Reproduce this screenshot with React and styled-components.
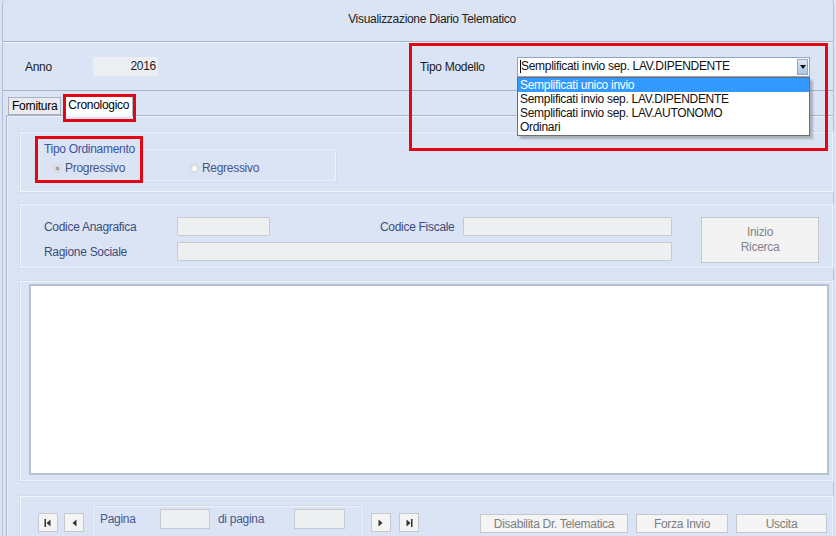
import React from "react";
import styled, { createGlobalStyle } from "styled-components";

const GlobalStyle = createGlobalStyle`
  html, body {
    margin: 0;
    padding: 0;
    background: #dae4f4;
  }
  body {
    font-family: "Liberation Sans", Arial, sans-serif;
    font-size: 12px;
    letter-spacing: -0.3px;
  }
`;

const Window = styled.div`
  position: relative;
  width: 836px;
  height: 536px;
  overflow: hidden;
  background: #dae4f4;
  display: flex;
  flex-direction: column;
`;

const Frame = styled.div`
  flex: 1;
  margin: 0 2px;
  border-left: 1px solid #b3c0d3;
  border-right: 1px solid #b3c0d3;
  border-top-left-radius: 4px;
  border-top-right-radius: 4px;
  display: flex;
  flex-direction: column;
`;

const TitleBar = styled.div`
  height: 38px;
  padding: 0 0 3px 28px;
  display: flex;
  align-items: center;
  justify-content: center;
  color: #222;
  border-bottom: 1px solid #a8b5c8;
`;

const HeaderPanel = styled.div`
  position: relative;
  height: 47px;
  border-top: 1px solid #f0f4fb;
  border-bottom: 1px solid #a8b5c8;
  display: flex;
  align-items: center;
  justify-content: space-between;
  padding: 0 23px 0 22px;
`;

const FieldGroup = styled.div`
  position: relative;
  display: flex;
  align-items: center;
`;

const HeaderLabel = styled.span`
  width: ${(p) => p.$w}px;
  color: #1c1c1c;
`;

const YearBox = styled.div`
  width: 63px;
  height: 19px;
  background: #eceef2;
  text-align: right;
  line-height: 19px;
  padding-right: 2px;
  color: #1c1c1c;
`;

const Combo = styled.div`
  position: relative;
  width: 291px;
  height: 18px;
  background: #fff;
  border: 1px solid #8ea4c2;
  display: flex;
  align-items: center;
  color: #111;
`;

const ComboText = styled.span`
  flex: 1;
  border-left: 1px solid #000;
  margin-left: 2px;
  line-height: 13px;
`;

const ComboArrow = styled.div`
  width: 11px;
  height: 16px;
  margin-right: 1px;
  background: linear-gradient(#dfe9f6, #a9c3e2);
  border: 1px solid #90a8c8;
  box-sizing: border-box;
  display: flex;
  align-items: center;
  justify-content: center;
`;

const DropList = styled.div`
  position: absolute;
  top: 19px;
  left: -1px;
  width: 291px;
  background: #fff;
  border: 1px solid #6e6e6e;
  box-shadow: 3px 3px 2px rgba(80, 80, 80, 0.35);
  padding: 0 0 1px 0;
  z-index: 5;
`;

const DropItem = styled.div`
  height: 14px;
  line-height: 14px;
  padding-left: 2px;
  color: ${(p) => (p.$active ? "#fff" : "#111")};
  background: ${(p) => (p.$active ? "#3399ff" : "transparent")};
`;

const Highlight = styled.div`
  position: absolute;
  top: ${(p) => p.$top}px;
  left: ${(p) => p.$left}px;
  width: ${(p) => p.$w}px;
  height: ${(p) => p.$h}px;
  border: 3px solid #e30613;
  box-sizing: border-box;
  pointer-events: none;
  z-index: 10;
`;

const TabArea = styled.div`
  flex: 1;
  display: flex;
  flex-direction: column;
  margin-top: 2px;
`;

const TabStrip = styled.div`
  display: flex;
  align-items: flex-end;
  padding-left: 5px;
  gap: 3px;
  height: 22px;
  position: relative;
  z-index: 2;
`;

const Tab = styled.div`
  position: relative;
  height: ${(p) => (p.$active ? 22 : 18)}px;
  margin-bottom: ${(p) => (p.$active ? -1 : 0)}px;
  padding: 0 3px;
  background: ${(p) => (p.$active ? "#ffffff" : "#e9ebee")};
  border: 1px solid #a9b2be;
  border-bottom: ${(p) => (p.$active ? "none" : "1px solid #a9b2be")};
  box-sizing: border-box;
  display: flex;
  align-items: ${(p) => (p.$active ? "flex-start" : "center")};
  padding-top: ${(p) => (p.$active ? 3 : 0)}px;
  color: #000;
`;

const TabPanel = styled.div`
  position: relative;
  flex: 1;
  margin-left: 3px;
  border-left: 1px solid #a9b5c6;
  border-top: 1px solid #a9b5c6;
  box-shadow: inset 1px 1px 0 #eef3fb;
  padding: 16px 0 0 13px;
  display: flex;
  flex-direction: column;
`;

const Section = styled.div`
  position: relative;
  height: ${(p) => p.$h}px;
  margin-top: ${(p) => p.$mt || 0}px;
  border: 1px solid #eef3fb;
  box-shadow: 0 0 0 1px #d2dcec;
  box-sizing: border-box;
  flex-shrink: 0;
`;

const GroupBox = styled.fieldset`
  width: 301px;
  height: 39px;
  margin: 9px 0 0 14px;
  padding: 0 0 0 17px;
  box-sizing: border-box;
  border: 1px solid #eaf0fa;
  box-shadow: 0 0 0 1px #d3ddec;
`;

const Legend = styled.legend`
  padding: 0 1px;
  margin-left: -10px;
  color: #3a56a4;
  line-height: 14px;
`;

const RadioRow = styled.div`
  display: flex;
  align-items: center;
  height: 20px;
  margin-top: 2px;
`;

const RadioItem = styled.label`
  display: flex;
  align-items: center;
  width: ${(p) => p.$w}px;
  color: #4a5483;
  gap: 3px;
`;

const RadioDot = styled.span`
  width: 9px;
  height: 9px;
  border-radius: 50%;
  border: 1px solid #cdd1d6;
  background: ${(p) =>
    p.$checked
      ? "radial-gradient(circle, #a4a4a4 0 1.8px, #ececec 2.4px)"
      : "radial-gradient(circle, #fbfbfb 0, #e4e4e4 100%)"};
  box-sizing: border-box;
`;

const SearchGrid = styled.div`
  display: grid;
  grid-template-columns: 133px 93px 110px 83px 209px 29px 118px;
  grid-template-rows: 19px 19px;
  row-gap: 6px;
  padding: 12px 0 0 23px;
  align-items: center;
`;

const FormLabel = styled.span`
  color: #3d4c7e;
  white-space: nowrap;
`;

const InputBox = styled.div`
  grid-column: ${(p) => p.$col || "auto"};
  height: 19px;
  background: #eeeff1;
  border: 1px solid #c6cbd3;
  box-sizing: border-box;
  border-radius: 1px;
`;

const SearchButton = styled.div`
  grid-column: 7;
  grid-row: 1 / 3;
  align-self: start;
  height: 46px;
  background: #f3f3f3;
  border: 1px solid #c4c8cf;
  box-sizing: border-box;
  color: #858585;
  display: flex;
  align-items: center;
  justify-content: center;
  text-align: center;
  line-height: 15px;
`;

const ListBox = styled.div`
  position: absolute;
  top: 2px;
  left: 8px;
  right: 3px;
  bottom: 5px;
  background: #fff;
  border: 2px solid #b8c3d2;
`;

const BottomRow = styled.div`
  display: flex;
  align-items: flex-start;
  padding: 9px 0 0 17px;
`;

const NavButton = styled.div`
  width: 20px;
  height: 19px;
  margin-top: 7px;
  margin-right: ${(p) => p.$mr}px;
  background: #f4f4f4;
  border: 1px solid #c4c8cf;
  box-sizing: border-box;
  display: flex;
  align-items: center;
  justify-content: center;
`;

const PageBox = styled.div`
  width: 270px;
  height: 40px;
  margin-right: 8px;
  border: 1px solid #eaf0fa;
  box-shadow: 0 0 0 1px #d3ddec;
  box-sizing: border-box;
  display: flex;
  align-items: flex-start;
  padding: 2px 0 0 6px;
`;

const PageLabel = styled.span`
  width: ${(p) => p.$w}px;
  color: #4b5a8b;
  line-height: 20px;
`;

const PageInput = styled.div`
  width: ${(p) => p.$w}px;
  height: 20px;
  margin-right: 8px;
  background: #eeeff1;
  border: 1px solid #c6cbd3;
  box-sizing: border-box;
`;

const ActionButton = styled.div`
  width: ${(p) => p.$w}px;
  height: 19px;
  margin-top: 8px;
  margin-left: ${(p) => p.$ml}px;
  background: #f4f4f4;
  border: 1px solid #c4c8cf;
  box-sizing: border-box;
  color: #7f7f7f;
  display: flex;
  align-items: center;
  justify-content: center;
`;

const NavIcon = ({ dir, bar }) => (
  <svg width="10" height="10" viewBox="0 0 10 10">
    {dir === "left" ? (
      <>
        {bar && <rect x="1.5" y="1" width="1.5" height="8" fill="#333" />}
        <polygon points="7.5,1.5 3.5,5 7.5,8.5" fill="#333" />
      </>
    ) : (
      <>
        <polygon points="2.5,1.5 6.5,5 2.5,8.5" fill="#333" />
        {bar && <rect x="7" y="1" width="1.5" height="8" fill="#333" />}
      </>
    )}
  </svg>
);

const options = [
  "Semplificati unico invio",
  "Semplificati invio sep. LAV.DIPENDENTE",
  "Semplificati invio sep. LAV.AUTONOMO",
  "Ordinari",
];

export default function App() {
  return (
    <>
      <GlobalStyle />
      <Window>
        <Frame>
          <TitleBar>Visualizzazione Diario Telematico</TitleBar>

          <HeaderPanel>
            <FieldGroup>
              <HeaderLabel $w={68}>Anno</HeaderLabel>
              <YearBox>2016</YearBox>
            </FieldGroup>
            <FieldGroup>
              <HeaderLabel $w={97}>Tipo Modello</HeaderLabel>
              <Combo>
                <ComboText>Semplificati invio sep. LAV.DIPENDENTE</ComboText>
                <ComboArrow>
                  <svg width="6" height="4" viewBox="0 0 6 4">
                    <polygon points="0,0 6,0 3,4" fill="#111" />
                  </svg>
                </ComboArrow>
                <DropList>
                  {options.map((o, i) => (
                    <DropItem key={o} $active={i === 0}>
                      {o}
                    </DropItem>
                  ))}
                </DropList>
              </Combo>
              <Highlight $top={-14} $left={-11} $w={419} $h={108} />
            </FieldGroup>
          </HeaderPanel>

          <TabArea>
            <TabStrip>
              <Tab>Fornitura</Tab>
              <Tab $active>
                Cronologico
                <Highlight $top={-1} $left={-2} $w={73} $h={28} />
              </Tab>
            </TabStrip>

            <TabPanel>
              <Section $h={60}>
                <GroupBox>
                  <Legend>Tipo Ordinamento</Legend>
                  <RadioRow>
                    <RadioItem $w={137}>
                      <RadioDot $checked />
                      Progressivo
                    </RadioItem>
                    <RadioItem $w={120}>
                      <RadioDot />
                      Regressivo
                    </RadioItem>
                  </RadioRow>
                </GroupBox>
                <Highlight $top={3} $left={14} $w={108} $h={47} />
              </Section>

              <Section $h={64} $mt={12}>
                <SearchGrid>
                  <FormLabel>Codice Anagrafica</FormLabel>
                  <InputBox />
                  <span />
                  <FormLabel>Codice Fiscale</FormLabel>
                  <InputBox />
                  <span />
                  <SearchButton>
                    Inizio
                    <br />
                    Ricerca
                  </SearchButton>
                  <FormLabel>Ragione Sociale</FormLabel>
                  <InputBox $col="2 / 6" />
                </SearchGrid>
              </Section>

              <Section $h={200} $mt={13}>
                <ListBox />
              </Section>

              <Section $h={60} $mt={15}>
                <BottomRow>
                  <NavButton $mr={6}>
                    <NavIcon dir="left" bar />
                  </NavButton>
                  <NavButton $mr={9}>
                    <NavIcon dir="left" />
                  </NavButton>
                  <PageBox>
                    <PageLabel $w={60}>Pagina</PageLabel>
                    <PageInput $w={50} />
                    <PageLabel $w={76}>di pagina</PageLabel>
                    <PageInput $w={51} />
                  </PageBox>
                  <NavButton $mr={8}>
                    <NavIcon dir="right" />
                  </NavButton>
                  <NavButton $mr={0}>
                    <NavIcon dir="right" bar />
                  </NavButton>
                  <ActionButton $w={148} $ml={61}>
                    Disabilita Dr. Telematica
                  </ActionButton>
                  <ActionButton $w={92} $ml={8}>
                    Forza Invio
                  </ActionButton>
                  <ActionButton $w={91} $ml={8}>
                    Uscita
                  </ActionButton>
                </BottomRow>
              </Section>
            </TabPanel>
          </TabArea>
        </Frame>
      </Window>
    </>
  );
}
